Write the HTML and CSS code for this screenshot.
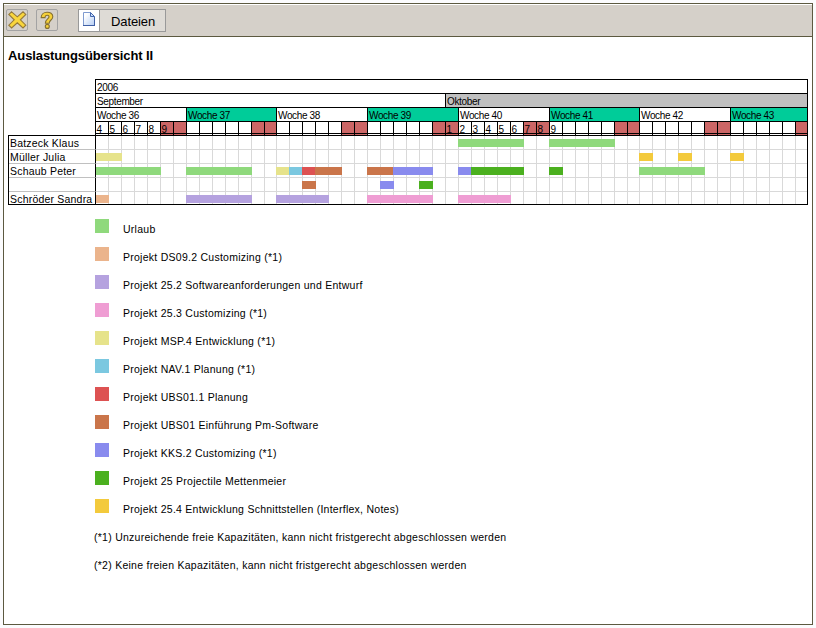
FILE: index.html
```html
<!DOCTYPE html>
<html lang="de">
<head>
    <meta charset="UTF-8">
    <title>Auslastungsübersicht II</title>
    <link rel="stylesheet" href="styles.css">
</head>
<body>
    <div class="window">
        <div class="toolbar">
            <button class="tool-btn" title="Schließen">
                <svg width="20" height="20" viewBox="0 0 20 20">
                    <path d="M4.6 1.8 L10.3 6.8 L16 1.8 L18.8 4.4 L13.4 9.8 L18.8 15.2 L16 18 L10.3 12.8 L4.6 18 L1.8 15.2 L7.2 9.8 L1.8 4.4 Z" fill="#f9d63c" stroke="#94793a" stroke-width="1.1"/>
                </svg>
            </button>
            <button class="tool-btn help" title="Hilfe">
                <svg width="20" height="20" viewBox="0 0 20 20">
                    <path d="M4.2 7.6 C4 0.6 16 0.6 15.8 6.8 C15.8 10 12.2 10 12.2 13.2 H8.4 C8.4 9 12 9 12 6.8 C12 4.6 8 4.6 8 7.6 Z" fill="#f6d13a" stroke="#86702f" stroke-width="1.1"/>
                    <circle cx="10.3" cy="16.4" r="2" fill="#f6d13a" stroke="#86702f" stroke-width="1.1"/>
                </svg>
            </button>
            <button class="file-btn">
                <span class="file-icon">
                    <svg width="14" height="16" viewBox="0 0 14 16">
                        <defs>
                            <linearGradient id="paper" x1="0" y1="0" x2="1" y2="1">
                                <stop offset="0.2" stop-color="#ffffff"/>
                                <stop offset="1" stop-color="#b4cdf4"/>
                            </linearGradient>
                        </defs>
                        <path d="M1.5 1.5 H8.5 L12.5 5.5 V14.5 H1.5 Z" fill="url(#paper)" stroke="#7f9bd0"/>
                        <path d="M8.5 1.5 V5.5 H12.5 Z" fill="#c9dbf8" stroke="#4467ae"/>
                        <path d="M1 14.5 H13 M12.5 6 V15" stroke="#3f5fa5"/>
                    </svg>
                </span>
                <span class="file-label">Dateien</span>
            </button>
        </div>

        <h1 class="title">Auslastungsübersicht II</h1>

        <div class="chart">
            <div class="names">
                <div class="name">Batzeck Klaus</div>
                <div class="name">Müller Julia</div>
                <div class="name">Schaub Peter</div>
                <div class="name"></div>
                <div class="name">Schröder Sandra</div>
            </div>
            <div class="plan">
                <div class="head year">2006</div>
                <div class="head days-grid" id="months"></div>
                <div class="head days-grid" id="weeks"></div>
                <div class="days days-grid" id="days"></div>
                <div class="gap days-grid" id="gap"></div>
                <div id="rows"></div>
            </div>
        </div>

        <div class="legend">
            <div class="entry"><i class="box urlaub"></i><span>Urlaub</span></div>
            <div class="entry"><i class="box ds09"></i><span>Projekt DS09.2 Customizing (*1)</span></div>
            <div class="entry"><i class="box p252"></i><span>Projekt 25.2 Softwareanforderungen und Entwurf</span></div>
            <div class="entry"><i class="box p253"></i><span>Projekt 25.3 Customizing (*1)</span></div>
            <div class="entry"><i class="box msp4"></i><span>Projekt MSP.4 Entwicklung (*1)</span></div>
            <div class="entry"><i class="box nav1"></i><span>Projekt NAV.1 Planung (*1)</span></div>
            <div class="entry"><i class="box ubs011"></i><span>Projekt UBS01.1 Planung</span></div>
            <div class="entry"><i class="box ubs01"></i><span>Projekt UBS01 Einführung Pm-Software</span></div>
            <div class="entry"><i class="box kks2"></i><span>Projekt KKS.2 Customizing (*1)</span></div>
            <div class="entry"><i class="box p25"></i><span>Projekt 25 Projectile Mettenmeier</span></div>
            <div class="entry"><i class="box p254"></i><span>Projekt 25.4 Entwicklung Schnittstellen (Interflex, Notes)</span></div>
            <p class="note">(*1) Unzureichende freie Kapazitäten, kann nicht fristgerecht abgeschlossen werden</p>
            <p class="note">(*2) Keine freien Kapazitäten, kann nicht fristgerecht abgeschlossen werden</p>
        </div>
    </div>
    <script src="script.js"></script>
</body>
</html>
```
FILE: styles.css
```css
body {
    margin: 0;
    height: 628px;
    box-sizing: border-box;
    padding: 3px;
    background: #fbfbfd;
    font-family: "Liberation Sans", Arial, sans-serif;
    color: #000;
    overflow: hidden;
}
.window {
    width: 810px;
    height: 622px;
    box-sizing: border-box;
    border: 1px solid #5c5940;
    background: #fff;
}

/* Toolbar */
.toolbar {
    display: flex;
    align-items: flex-start;
    height: 33px;
    box-sizing: border-box;
    padding: 4px 0 0 2px;
    background: #d5d0c9;
    border-top: 1px solid #fff;
    border-bottom: 1px solid #5c5940;
}
.tool-btn {
    display: flex;
    width: 22px;
    height: 22px;
    padding: 0;
    margin-right: 8px;
    border: 1px solid #a3a3a3;
    border-radius: 2px;
    background: none;
}
.tool-btn svg {
    display: block;
}
.tool-btn.help {
    margin-right: 20px;
}
.file-btn {
    display: flex;
    width: 88px;
    height: 23px;
    padding: 0;
    border: 1px solid #999;
    background: #dedbd6;
    font-family: inherit;
    color: #000;
}
.file-icon {
    width: 20px;
    height: 21px;
    border-right: 1px solid #999;
    background: #fff;
    text-align: left;
}
.file-icon svg {
    display: block;
    margin: 1px 0 0 3px;
}
.file-label {
    padding-left: 11px;
    font-size: 13px;
    line-height: 23px;
    letter-spacing: -0.1px;
    white-space: nowrap;
}
.title {
    margin: 10px 0 0 4px;
    height: 32px;
    font-size: 13px;
    line-height: 18px;
    font-weight: bold;
    letter-spacing: -0.1px;
    white-space: nowrap;
}

/* Chart */
.chart {
    display: flex;
    align-items: flex-end;
    margin-left: 4px;
    width: 800px;
    height: 126px;
}
.names {
    width: 87px;
    height: 70px;
    box-sizing: border-box;
    border: 1px solid #000;
    border-right: none;
}
.name {
    height: 14px;
    box-sizing: border-box;
    padding-left: 1px;
    border-bottom: 1px solid #c0c0c0;
    font-size: 10.5px;
    line-height: 15px;
    letter-spacing: 0.2px;
    white-space: nowrap;
}
.name:last-child {
    border-bottom: none;
}
.plan {
    width: 713px;
    height: 126px;
    box-sizing: border-box;
    border-top: 1px solid #000;
    border-right: 1px solid #000;
    border-bottom: 1px solid #000;
    background: #fff;
}
.days-grid {
    display: grid;
    grid-template-columns: repeat(13, 13px) 12px repeat(27, 13px) 12px repeat(12, 13px) 12px;
}
.head {
    height: 14px;
    box-sizing: border-box;
    border-bottom: 1px solid #000;
    font-size: 10px;
    line-height: 15px;
    letter-spacing: -0.35px;
    white-space: nowrap;
}
.year, .head > div {
    padding-left: 1px;
    border-left: 1px solid #000;
}
.head > div {
    height: 13px;
}
.days {
    height: 11px;
}
.days > div {
    border-left: 1px solid #000;
    padding-left: 0.5px;
    font-size: 10px;
    line-height: 16px;
    height: 11px;
}
.gap {
    height: 3px;
    box-sizing: border-box;
    border-top: 1px solid #000;
    border-bottom: 1px solid #000;
}
.gap > div {
    border-left: 1px solid #000;
    height: 1px;
}
.october {
    background: #c0c0c0;
}
.even {
    background: #00cc99;
}
.weekend {
    background: #cc6666;
}
.row {
    height: 14px;
    grid-template-rows: 14px;
}
.row:last-child {
    height: 12px;
    grid-template-rows: 12px;
}
.cell {
    grid-row: 1;
    border-left: 1px solid #d9d9d9;
    border-bottom: 1px solid #d9d9d9;
}
.cell.first {
    border-left-color: #000;
}
.row:last-child .cell {
    border-bottom: none;
}
.bar {
    grid-row: 1;
    height: 8px;
    margin: 3px -1px 0 0;
    z-index: 1;
}
.bar.start {
    margin-left: 1px;
}

/* Legend */
.legend {
    margin: 14px 0 0 91px;
}
.entry {
    display: flex;
    height: 28px;
}
.box {
    width: 14px;
    height: 14px;
    margin-right: 14px;
}
.entry span, .note {
    font-size: 10.5px;
    letter-spacing: 0.26px;
    line-height: 14px;
    white-space: nowrap;
}
.entry span {
    padding-top: 3px;
}
.note {
    margin: 0 0 14px -1px;
    padding-top: 3px;
    height: 11px;
}
.urlaub { background: #8fd97c; }
.ds09 { background: #ebb48c; }
.p252 { background: #b5a2df; }
.p253 { background: #ef9dd3; }
.msp4 { background: #e6e38b; }
.nav1 { background: #7bc8e0; }
.ubs011 { background: #dd5252; }
.ubs01 { background: #ca754a; }
.kks2 { background: #898bee; }
.p25 { background: #4bb01f; }
.p254 { background: #f3ca3c; }
```
FILE: script.js
```js
const DAYS = 55;
const WEEK = 7;

// Beschriftete Tage: Spalte -> Tag
const dayLabels = {
    0: 4, 1: 5, 2: 6, 3: 7, 4: 8, 5: 9,
    27: 1, 28: 2, 29: 3, 30: 4, 31: 5, 32: 6, 33: 7, 34: 8, 35: 9
};

// Balken je Zeile: [erste Spalte, Anzahl Tage, Klasse]
const rows = [
    [[28, 5, 'urlaub'], [35, 5, 'urlaub']],
    [[0, 2, 'msp4'], [42, 1, 'p254'], [45, 1, 'p254'], [49, 1, 'p254']],
    [[0, 5, 'urlaub'], [7, 5, 'urlaub'], [14, 1, 'msp4'], [15, 1, 'nav1'], [16, 1, 'ubs011'],
     [17, 2, 'ubs01'], [21, 2, 'ubs01'], [23, 3, 'kks2'], [28, 1, 'kks2'], [29, 4, 'p25'],
     [35, 1, 'p25'], [42, 5, 'urlaub']],
    [[16, 1, 'ubs01'], [22, 1, 'kks2'], [25, 1, 'p25']],
    [[0, 1, 'ds09'], [7, 5, 'p252'], [14, 4, 'p252'], [21, 5, 'p253'], [28, 4, 'p253']]
];

function add(parent, cls, start, span, text) {
    const el = document.createElement('div');
    el.className = cls;
    el.style.gridColumn = (start + 1) + ' / span ' + span;
    el.textContent = text;
    parent.appendChild(el);
}

const months = document.getElementById('months');
add(months, 'september', 0, 27, 'September');
add(months, 'october', 27, 28, 'Oktober');

const weeks = document.getElementById('weeks');
for (let w = 0; w < 8; w++) {
    add(weeks, w % 2 ? 'even' : '', w * WEEK, Math.min(WEEK, DAYS - w * WEEK), 'Woche ' + (36 + w));
}

const days = document.getElementById('days');
const gap = document.getElementById('gap');
for (let d = 0; d < DAYS; d++) {
    const cls = d % WEEK > 4 ? 'weekend' : '';
    add(days, cls, d, 1, dayLabels[d] || '');
    add(gap, cls, d, 1, '');
}

const rowsEl = document.getElementById('rows');
rows.forEach(bars => {
    const row = document.createElement('div');
    row.className = 'row days-grid';
    for (let d = 0; d < DAYS; d++) {
        add(row, d === 0 ? 'cell first' : 'cell', d, 1, '');
    }
    bars.forEach(([start, len, cls]) => {
        add(row, 'bar ' + cls + (start === 0 ? ' start' : ''), start, len, '');
    });
    rowsEl.appendChild(row);
});
```
